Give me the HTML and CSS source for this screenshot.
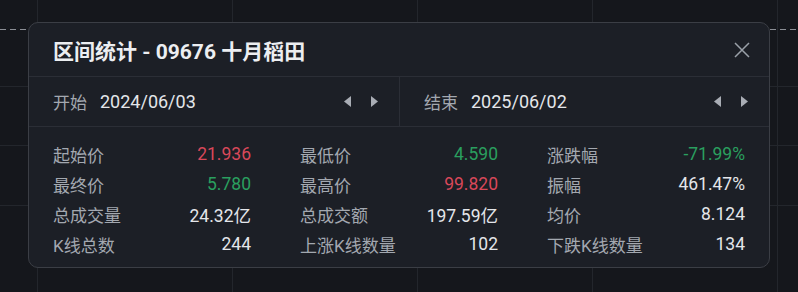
FILE: index.html
```html
<!DOCTYPE html>
<html lang="zh-CN">
<head>
  <meta charset="UTF-8">
  <meta name="viewport" content="width=device-width, initial-scale=1.0">
  <title>区间统计</title>
  <link rel="stylesheet" href="styles.css">
</head>
<body>
  <div class="chart">
    <div class="crosshair"></div>

    <div class="stats-panel">
      <!-- Header -->
      <div class="panel-head">
        <h1>区间统计 - 09676 十月稻田</h1>
        <span class="close-btn">
          <svg width="16" height="16" viewBox="0 0 16 16"><path d="M1 1 L15 15 M15 1 L1 15" stroke="#9aa0a8" stroke-width="1.5" fill="none"/></svg>
        </span>
      </div>

      <!-- Date range -->
      <div class="range">
        <div class="range-item">
          <span class="range-label">开始</span>
          <span class="range-date">2024/06/03</span>
          <span class="arrows">
            <svg width="8" height="11" viewBox="0 0 8 11"><path d="M7 0 L7 11 L0 5.5 Z" fill="#a9adb5"/></svg>
            <svg width="8" height="11" viewBox="0 0 8 11"><path d="M1 0 L1 11 L8 5.5 Z" fill="#a9adb5"/></svg>
          </span>
        </div>
        <div class="range-item">
          <span class="range-label">结束</span>
          <span class="range-date">2025/06/02</span>
          <span class="arrows">
            <svg width="8" height="11" viewBox="0 0 8 11"><path d="M7 0 L7 11 L0 5.5 Z" fill="#a9adb5"/></svg>
            <svg width="8" height="11" viewBox="0 0 8 11"><path d="M1 0 L1 11 L8 5.5 Z" fill="#a9adb5"/></svg>
          </span>
        </div>
      </div>

      <!-- Stats grid -->
      <div class="stats">
        <div class="stat"><span class="label">起始价</span><span class="value up">21.936</span></div>
        <div class="stat"><span class="label">最低价</span><span class="value down">4.590</span></div>
        <div class="stat"><span class="label">涨跌幅</span><span class="value down">-71.99%</span></div>

        <div class="stat"><span class="label">最终价</span><span class="value down">5.780</span></div>
        <div class="stat"><span class="label">最高价</span><span class="value up">99.820</span></div>
        <div class="stat"><span class="label">振幅</span><span class="value">461.47%</span></div>

        <div class="stat"><span class="label">总成交量</span><span class="value">24.32亿</span></div>
        <div class="stat"><span class="label">总成交额</span><span class="value">197.59亿</span></div>
        <div class="stat"><span class="label">均价</span><span class="value">8.124</span></div>

        <div class="stat"><span class="label">K线总数</span><span class="value">244</span></div>
        <div class="stat"><span class="label">上涨K线数量</span><span class="value">102</span></div>
        <div class="stat"><span class="label">下跌K线数量</span><span class="value">134</span></div>
      </div>
    </div>
  </div>
</body>
</html>
```

FILE: styles.css
```css
body {
  margin: 0;
  padding: 0;
  background-color: #15171c;
  font-family: Roboto, "Noto Sans CJK SC", sans-serif;
  color: #e4e6ea;
}

/* chart background with grid lines */
.chart {
  position: relative;
  width: 798px;
  height: 292px;
  padding: 22px 0 0 28px;
  box-sizing: border-box;
  background-color: #15171c;
  background-image:
    linear-gradient(#23262c, #23262c),
    linear-gradient(#23262c, #23262c),
    linear-gradient(#23262c, #23262c),
    linear-gradient(#23262c, #23262c),
    linear-gradient(#23262c, #23262c),
    linear-gradient(#23262c, #23262c),
    linear-gradient(#23262c, #23262c),
    linear-gradient(#23262c, #23262c);
  background-repeat: no-repeat;
  background-size: 1px 100%, 1px 100%, 1px 100%, 1px 100%, 1px 100%, 100% 1px, 100% 1px, 100% 1px;
  background-position: 37px 0, 232px 0, 417px 0, 592px 0, 777px 0, 0 86px, 0 145px, 0 205px;
}

.crosshair {
  position: absolute;
  left: 0;
  right: 0;
  top: 29px;
  height: 1px;
  background-image: repeating-linear-gradient(to right, #8b8e95 0 6px, transparent 6px 10px);
}

.stats-panel {
  position: relative;
  width: 742px;
  box-sizing: border-box;
  background-color: #1c1f26;
  border: 1px solid #3b3e45;
  border-radius: 10px;
}

.panel-head {
  height: 53px;
  display: flex;
  align-items: center;
  justify-content: space-between;
  padding: 0 19px 0 24px;
  border-bottom: 1px solid #2b2e36;
}

.panel-head h1 {
  margin: 0;
  font-size: 21px;
  font-weight: 700;
  color: #eceef1;
}

.close-btn {
  display: flex;
  cursor: pointer;
}

.range {
  display: grid;
  grid-template-columns: 370px 1fr;
  height: 49px;
  border-bottom: 1px solid #2b2e36;
}

.range-item {
  display: flex;
  align-items: center;
  padding: 0 21px 0 24px;
}

.range-item + .range-item {
  border-left: 1px solid #2b2e36;
}

.range-label {
  font-size: 17px;
  color: #a3a8b0;
  margin-right: 13px;
}

.range-date {
  font-size: 18px;
  color: #e4e6ea;
}

.arrows {
  margin-left: auto;
  display: flex;
  gap: 18px;
}

.stats {
  display: grid;
  grid-template-columns: repeat(3, 1fr);
  column-gap: 49px;
  padding: 12px 24px 8px 24px;
}

.stat {
  display: flex;
  justify-content: space-between;
  align-items: center;
  height: 30px;
}

.label {
  font-size: 17px;
  color: #a3a8b0;
}

.value {
  font-size: 17.5px;
  color: #e4e6ea;
}

.value.up {
  color: #d9485a;
}

.value.down {
  color: #2a9f5f;
}
```
